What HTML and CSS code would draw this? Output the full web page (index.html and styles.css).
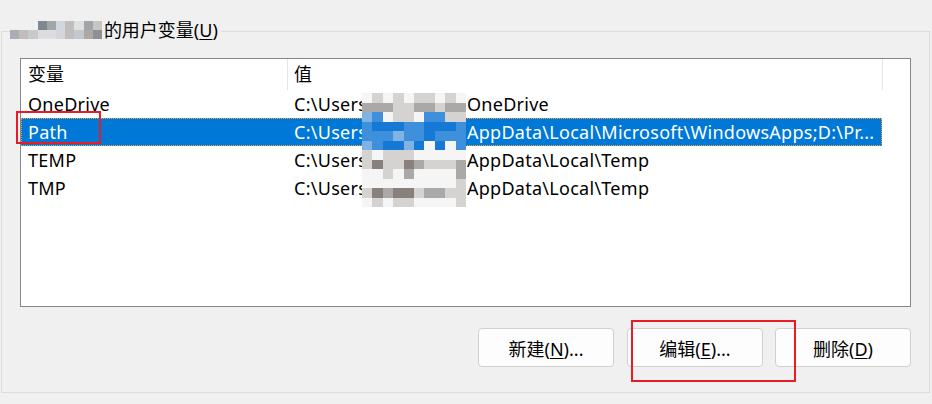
FILE: index.html
```html
<!DOCTYPE html>
<html lang="zh-CN">
<head>
  <meta charset="UTF-8">
  <title>环境变量</title>
  <link rel="stylesheet" href="styles.css">
</head>
<body>
  <div class="group">
    <div class="legend">
      <div class="mosaic mosaic-name">
        <i class="n"></i><i class="n"></i><i class="n"></i><i class="t1"></i><i class="t2"></i><i class="t3"></i><i class="t4"></i><i class="t5"></i><i class="t6"></i><i class="t7"></i>
        <i class="u1"></i><i class="u2"></i><i class="u3"></i><i class="u4"></i><i class="u4"></i><i class="u5"></i><i class="u2"></i><i class="u6"></i><i class="u7"></i><i class="u8"></i>
      </div>
      <span>的用户变量(<u>U</u>)</span>
    </div>

    <div class="listbox">
      <div class="head">
        <div class="cell">变量</div>
        <div class="cell">值</div>
        <div class="cell"></div>
      </div>
      <div class="row">
        <div class="cell">OneDrive</div>
        <div class="cell"><span class="user">C:\Users</span>OneDrive</div>
      </div>
      <div class="row selected">
        <div class="cell">Path</div>
        <div class="cell"><span class="user">C:\Users</span>AppData\Local\Microsoft\WindowsApps;D:\Pr...</div>
      </div>
      <div class="row">
        <div class="cell">TEMP</div>
        <div class="cell"><span class="user">C:\Users</span>AppData\Local\Temp</div>
      </div>
      <div class="row">
        <div class="cell">TMP</div>
        <div class="cell"><span class="user">C:\Users</span>AppData\Local\Temp</div>
      </div>

      <!-- blurred user name -->
      <div class="mosaic mosaic-user">
        <i class="w"></i><i class="l"></i><i class="w"></i><i class="l"></i><i class="w"></i><i class="l"></i><i class="l"></i><i class="w"></i><i class="l"></i><i class="w"></i>
        <i class="g"></i><i class="g"></i><i class="g"></i><i class="l"></i><i class="l"></i><i class="g"></i><i class="g"></i><i class="l"></i><i class="g"></i><i class="g"></i>
        <i class="b3"></i><i class="b1"></i><i class="w"></i><i class="l"></i><i class="l"></i><i class="w"></i><i class="b1"></i><i class="b1"></i><i class="l"></i><i class="l"></i>
        <i class="b1"></i><i class="b2"></i><i class="b2"></i><i class="b2"></i><i class="b1"></i><i class="b1"></i><i class="b2"></i><i class="b2"></i><i class="b2"></i><i class="b1"></i>
        <i class="b1"></i><i class="b1"></i><i class="b1"></i><i class="b3"></i><i class="b1"></i><i class="b1"></i><i class="b2"></i><i class="b1"></i><i class="b1"></i><i class="b1"></i>
        <i class="b3"></i><i class="b1"></i><i class="b2"></i><i class="b2"></i><i class="b3"></i><i class="b2"></i><i class="w"></i><i class="b2"></i><i class="w"></i><i class="b1"></i>
        <i class="l"></i><i class="w"></i><i class="l"></i><i class="l"></i><i class="l"></i><i class="w"></i><i class="w"></i><i class="w"></i><i class="w"></i><i class="w"></i>
        <i class="l"></i><i class="d"></i><i class="l"></i><i class="l"></i><i class="d"></i><i class="g"></i><i class="l"></i><i class="l"></i><i class="l"></i><i class="g"></i>
        <i class="w"></i><i class="w"></i><i class="l"></i><i class="w"></i><i class="g"></i><i class="w"></i><i class="w"></i><i class="w"></i><i class="w"></i><i class="g"></i>
        <i class="w"></i><i class="w"></i><i class="w"></i><i class="w"></i><i class="w"></i><i class="w"></i><i class="w"></i><i class="w"></i><i class="w"></i><i class="l"></i>
        <i class="l"></i><i class="d"></i><i class="g"></i><i class="d"></i><i class="d"></i><i class="l"></i><i class="g"></i><i class="g"></i><i class="l"></i><i class="l"></i>
        <i class="w"></i><i class="l"></i><i class="w"></i><i class="l"></i><i class="l"></i><i class="w"></i><i class="w"></i><i class="w"></i><i class="w"></i><i class="l"></i>
      </div>
    </div>

    <div class="buttons">
      <button>新建(<u>N</u>)...</button>
      <button>编辑(<u>E</u>)...</button>
      <button>删除(<u>D</u>)</button>
    </div>
  </div>

  <div class="mark mark-path"></div>
  <div class="mark mark-edit"></div>
</body>
</html>
```

FILE: styles.css
```css
body {
  margin: 0;
  background-color: #F0F0F0;
  color: #000000;
  font-family: "Noto Sans", "Noto Sans CJK SC", sans-serif;
  font-size: 18px;
  position: relative;
  width: 932px;
  height: 404px;
  overflow: hidden;
}
u {
  text-decoration-thickness: 1px;
  text-underline-offset: 2px;
}

/* group box */
.group {
  position: relative;
  margin: 31px 0 0 1px;
  width: 929px;
  height: 362px;
  box-sizing: border-box;
  border: 1px solid #DCDCDC;
  padding: 26px 0 0 18px;
}
.legend {
  position: absolute;
  top: -12px;
  left: 8px;
  height: 20px;
  padding-right: 3px;
  display: flex;
  align-items: center;
  background-color: #F0F0F0;
  line-height: 20px;
  white-space: nowrap;
}

/* pixelated blocks */
.mosaic {
  display: grid;
}
.mosaic i {
  display: block;
}
.mosaic-name {
  grid-template-columns: repeat(10, 9.2px);
  grid-template-rows: 9px 9px;
  margin-right: 2px;
}
.mosaic-name .n { background: transparent; }
.t1 { background: #7F8891; }
.t2 { background: #A0A8A6; }
.t3 { background: #D2D6DE; }
.t4 { background: #C1BDBD; }
.t5 { background: #DEE0E2; }
.t6 { background: #A1A5A9; }
.t7 { background: #C9C5C4; }
.u1 { background: #A9AEB6; }
.u2 { background: #C2BDBC; }
.u3 { background: #C9C9C9; }
.u4 { background: #DCDCE0; }
.u5 { background: #D5D6DD; }
.u6 { background: #C3C7CF; }
.u7 { background: #ADA8A6; }
.u8 { background: #8D9196; }

.mosaic-user {
  position: absolute;
  left: 341px;
  top: 34px;
  grid-template-columns: repeat(10, 10.4px);
  grid-template-rows: repeat(12, 9.5px);
}
.mosaic-user .w { background: #F5F5F6; }
.mosaic-user .l { background: #D5D3D2; }
.mosaic-user .g { background: #AAA9A8; }
.mosaic-user .d { background: #87807C; }
.mosaic-user .b1 { background: #3F90DC; }
.mosaic-user .b2 { background: #1779D6; }
.mosaic-user .b3 { background: #80B2E2; }

/* list view */
.listbox {
  position: relative;
  width: 891px;
  height: 249px;
  box-sizing: border-box;
  border: 1px solid #828790;
  background-color: #FFFFFF;
}
.head {
  display: grid;
  grid-template-columns: 267px 595px 1fr;
  height: 31px;
}
.head .cell {
  box-sizing: border-box;
  border-right: 1px solid #E5E5E5;
  line-height: 31px;
  padding-left: 7px;
}
.head .cell:nth-child(2) {
  padding-left: 6px;
}
.head .cell:last-child {
  border-right: none;
}
.row {
  display: grid;
  grid-template-columns: 267px 594px;
  width: 861px;
  height: 28px;
  line-height: 28px;
  white-space: nowrap;
  letter-spacing: 0.27px;
}
.row .cell {
  padding-left: 7px;
  overflow: hidden;
}
.row .cell:nth-child(2) {
  padding-left: 6px;
}
.row.selected {
  background-color: #0078D7;
  color: #FFFFFF;
  outline: 1px dotted #F39A3B;
  outline-offset: -1px;
}
.user {
  display: inline-block;
  width: 173px;
}

/* buttons */
.buttons {
  width: 891px;
  margin-top: 21px;
  display: flex;
  justify-content: flex-end;
  gap: 12px;
}
button {
  width: 136px;
  height: 39px;
  border: 1px solid #D0D0D0;
  border-radius: 4px;
  background-color: #FDFDFD;
  color: #000000;
  font-family: inherit;
  font-size: 18px;
  padding: 0;
}
button:first-child {
  margin-right: 1px;
}

/* red annotation boxes */
.mark {
  position: absolute;
  border: 2px solid #E81C24;
  box-sizing: border-box;
}
.mark-path {
  left: 16px;
  top: 111px;
  width: 85px;
  height: 33px;
}
.mark-edit {
  left: 631px;
  top: 320px;
  width: 165px;
  height: 62px;
}
```
